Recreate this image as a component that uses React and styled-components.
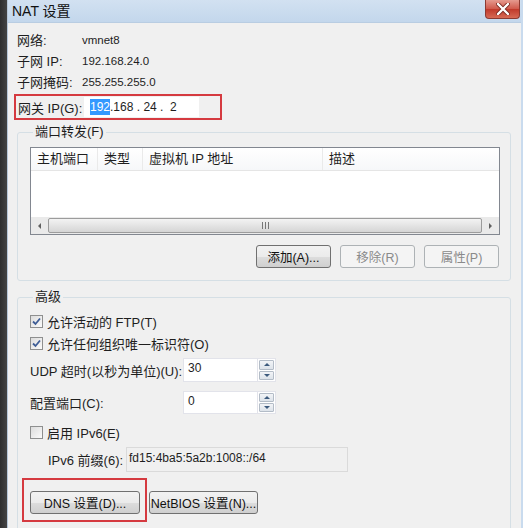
import React from 'react';
import styled, { createGlobalStyle } from 'styled-components';

const Global = createGlobalStyle`
    html, body {
        margin: 0;
        padding: 0;
        background: #383838;
    }
    body {
        font-family: "Liberation Sans", "Noto Sans CJK SC", sans-serif;
        font-size: 13px;
        color: #1e1e1e;
    }
`;

const Screen = styled.div`
    display: flex;
    width: 523px;
    height: 528px;
    overflow: hidden;
`;

const DarkStrip = styled.div`
    width: 7px;
    flex: none;
    background: linear-gradient(to right, #2e2e2e, #444);
`;

const Window = styled.div`
    flex: 1;
    display: flex;
    flex-direction: column;
    border-left: 1px solid #b7c7d8;
    border-right: 2px solid #c9dbee;
    background: #f0f0f0;
`;

const TitleBar = styled.div`
    height: 22px;
    flex: none;
    display: flex;
    align-items: flex-start;
    justify-content: space-between;
    background: linear-gradient(to bottom, #d2e1f1, #c3d7ec);
    border-bottom: 1px solid #b9cde2;
`;

const Title = styled.span`
    font-size: 14px;
    line-height: 22px;
    padding-left: 4px;
    color: #111;
`;

const CloseBtn = styled.div`
    width: 33px;
    height: 18px;
    margin-right: 1px;
    display: flex;
    align-items: center;
    justify-content: center;
    border: 1px solid #8c3a32;
    border-top: none;
    border-radius: 0 0 4px 4px;
    background: linear-gradient(to bottom, #e59a8f, #d0584a 50%, #c0392b 51%, #d66a55);
`;

const Client = styled.div`
    flex: 1;
    padding: 6px 10px 0 9px;
    display: flex;
    flex-direction: column;
`;

const InfoGrid = styled.div`
    display: grid;
    grid-template-columns: 65px 1fr;
    grid-auto-rows: 21px;
    align-items: center;
`;

const Label = styled.span`
    white-space: nowrap;
`;

const Value = styled.span`
    font-size: 11.5px;
`;

const Highlight = styled.div`
    display: flex;
    align-items: center;
    border: 2px solid #d53a40;
    margin-left: ${p => p.$ml || 0}px;
    padding: ${p => p.$pad};
    width: ${p => p.$w ? p.$w + 'px' : 'auto'};
    box-sizing: border-box;
`;

const IpBox = styled.div`
    width: 115px;
    height: 20px;
    box-sizing: border-box;
    background: #fff;
    display: flex;
    align-items: center;
    padding-left: 6px;
    font-size: 12px;
    white-space: pre;
`;

const Selected = styled.span`
    background: #3399ff;
    color: #fff;
    padding: 1px 0;
`;

const Group = styled.fieldset`
    margin: ${p => p.$mt}px 0 0 0;
    padding: ${p => p.$pt}px 10px ${p => p.$pb}px 12px;
    border: 1px solid #d5dfe5;
    border-radius: 3px;
    min-width: 0;
`;

const Legend = styled.legend`
    padding: 0 2px;
    margin-left: 3px;
    line-height: 18px;
`;

const ListView = styled.div`
    height: 88px;
    box-sizing: border-box;
    border: 1px solid #828790;
    background: #fff;
    display: flex;
    flex-direction: column;
`;

const Header = styled.div`
    display: grid;
    grid-template-columns: 67px 45px 180px 1fr;
    height: 22px;
    background: linear-gradient(to bottom, #fff, #f6f7f9);
    border-bottom: 1px solid #e5e5e5;
`;

const HeadCell = styled.div`
    padding-left: 6px;
    line-height: 22px;
    border-right: 1px solid ${p => p.$last ? 'transparent' : '#eaeaea'};
    white-space: nowrap;
`;

const ListBody = styled.div`
    flex: 1;
`;

const HScroll = styled.div`
    height: 17px;
    display: flex;
    align-items: center;
    background: #eaeaea;
`;

const Arrow = styled.div`
    width: 17px;
    height: 17px;
    display: flex;
    align-items: center;
    justify-content: center;
`;

const Thumb = styled.div`
    flex: 1;
    height: 15px;
    border: 1px solid #9c9c9c;
    border-radius: 2px;
    box-sizing: border-box;
    background: linear-gradient(to bottom, #f3f3f3, #e4e4e4 50%, #d5d5d5);
    display: flex;
    align-items: center;
    justify-content: center;
    gap: 2px;
`;

const Grip = styled.i`
    width: 1px;
    height: 7px;
    background: #777;
`;

const ButtonRow = styled.div`
    display: flex;
    justify-content: flex-end;
    gap: 9px;
    margin-top: 10px;
    padding-right: 1px;
`;

const Button = styled.div`
    width: ${p => p.$w || 75}px;
    height: 23px;
    box-sizing: border-box;
    display: flex;
    align-items: center;
    justify-content: center;
    border: 1px solid ${p => p.$disabled ? '#adb2b5' : '#707070'};
    border-radius: 3px;
    background: ${p => p.$disabled
        ? '#f4f4f4'
        : 'linear-gradient(to bottom, #f2f2f2, #ebebeb 50%, #dddddd 51%, #cfcfcf)'};
    color: ${p => p.$disabled ? '#8a8a8a' : '#111'};
    font-size: 12.5px;
    white-space: nowrap;
`;

const CheckRow = styled.div`
    display: flex;
    align-items: center;
    gap: 4px;
    height: 22px;
    margin-top: ${p => p.$mt || 0}px;
`;

const Box = styled.div`
    width: 13px;
    height: 13px;
    box-sizing: border-box;
    border: 1px solid #8e8f8f;
    background: linear-gradient(135deg, #dcdcdc, #fbfbfb);
    display: flex;
    align-items: center;
    justify-content: center;
`;

const FieldRow = styled.div`
    display: flex;
    align-items: center;
    margin-top: ${p => p.$mt}px;
    padding-left: ${p => p.$indent || 0}px;
`;

const FieldLabel = styled.span`
    width: ${p => p.$w}px;
    flex: none;
    white-space: nowrap;
`;

const Spin = styled.div`
    display: flex;
    height: ${p => p.$h}px;
`;

const NumInput = styled.div`
    width: 75px;
    box-sizing: border-box;
    background: #fff;
    border: 1px solid #e2e3ea;
    padding: 2px 4px;
    font-size: 12px;
`;

const SpinBtns = styled.div`
    width: 18px;
    display: flex;
    flex-direction: column;
    gap: 1px;
    background: #fff;
    border: 1px solid #e2e3ea;
    border-left: none;
    padding: 1px;
    box-sizing: border-box;
`;

const SpinBtn = styled.div`
    flex: 1;
    border: 1px solid #b3bcc7;
    border-radius: 1px;
    background: linear-gradient(to bottom, #f2f4f7, #dde3ea);
    display: flex;
    align-items: center;
    justify-content: center;
`;

const ReadOnly = styled.div`
    width: 222px;
    height: 25px;
    box-sizing: border-box;
    border: 1px solid #dadada;
    background: #f0f0f0;
    padding: 3px 2px;
    font-size: 12px;
`;

const BottomRow = styled.div`
    display: flex;
    align-items: flex-end;
    margin-top: 6px;
    margin-left: -8px;
`;

const Tri = ({ dir, color = '#555', size = 4 }) => {
    const pts = {
        left: `${size},0 ${size},${size * 2} 0,${size}`,
        right: `0,0 0,${size * 2} ${size},${size}`,
        up: `0,${size} ${size * 2},${size} ${size},0`,
        down: `0,0 ${size * 2},0 ${size},${size}`,
    }[dir];
    const w = dir === 'left' || dir === 'right' ? size : size * 2;
    const h = dir === 'left' || dir === 'right' ? size * 2 : size;
    return (
        <svg width={w} height={h}>
            <polygon points={pts} fill={color} />
        </svg>
    );
};

const Check = ({ checked }) => (
    <Box>
        {checked && (
            <svg width="9" height="9" viewBox="0 0 9 9">
                <path d="M1 4.5 L3.5 7 L8 1.5" stroke="#3e5d96" strokeWidth="1.8" fill="none" />
            </svg>
        )}
    </Box>
);

const Spinner = ({ value, h }) => (
    <Spin $h={h}>
        <NumInput>{value}</NumInput>
        <SpinBtns>
            <SpinBtn><Tri dir="up" color="#3d5a7d" size={3} /></SpinBtn>
            <SpinBtn><Tri dir="down" color="#3d5a7d" size={3} /></SpinBtn>
        </SpinBtns>
    </Spin>
);

const App = () => {
    return (
        <Screen>
            <Global />
            <DarkStrip />
            <Window>
                <TitleBar>
                    <Title>NAT 设置</Title>
                    <CloseBtn>
                        <svg width="14" height="12" viewBox="0 0 14 12">
                            <path d="M2 1 L12 11 M12 1 L2 11" stroke="#7a2a22" strokeWidth="4" strokeLinecap="round" />
                            <path d="M2 1 L12 11 M12 1 L2 11" stroke="#fff" strokeWidth="2.4" strokeLinecap="round" />
                        </svg>
                    </CloseBtn>
                </TitleBar>

                <Client>
                    <InfoGrid>
                        <Label>网络:</Label>
                        <Value>vmnet8</Value>
                        <Label>子网 IP:</Label>
                        <Value>192.168.24.0</Value>
                        <Label>子网掩码:</Label>
                        <Value>255.255.255.0</Value>
                    </InfoGrid>

                    <Highlight $ml={-3} $pad="1px 0 1px 2px" $w={208} style={{ marginTop: 2 }}>
                        <FieldLabel $w={66}>网关 IP(G):</FieldLabel>
                        <IpBox><Selected>192</Selected>{'.168 . 24 .  2'}</IpBox>
                    </Highlight>

                    <Group $mt={3} $pt={6} $pb={12}>
                        <Legend>端口转发(F)</Legend>
                        <ListView>
                            <Header>
                                <HeadCell>主机端口</HeadCell>
                                <HeadCell>类型</HeadCell>
                                <HeadCell>虚拟机 IP 地址</HeadCell>
                                <HeadCell $last>描述</HeadCell>
                            </Header>
                            <ListBody />
                            <HScroll>
                                <Arrow><Tri dir="left" color="#606060" size={3} /></Arrow>
                                <Thumb><Grip /><Grip /><Grip /></Thumb>
                                <Arrow><Tri dir="right" color="#606060" size={3} /></Arrow>
                            </HScroll>
                        </ListView>
                        <ButtonRow>
                            <Button>添加(A)...</Button>
                            <Button $disabled>移除(R)</Button>
                            <Button $disabled>属性(P)</Button>
                        </ButtonRow>
                    </Group>

                    <Group $mt={7} $pt={4} $pb={20}>
                        <Legend>高级</Legend>
                        <CheckRow>
                            <Check checked />
                            <span>允许活动的 FTP(T)</span>
                        </CheckRow>
                        <CheckRow>
                            <Check checked />
                            <span>允许任何组织唯一标识符(O)</span>
                        </CheckRow>
                        <FieldRow $mt={4}>
                            <FieldLabel $w={153}>UDP 超时(以秒为单位)(U):</FieldLabel>
                            <Spinner value="30" h={24} />
                        </FieldRow>
                        <FieldRow $mt={9}>
                            <FieldLabel $w={153}>配置端口(C):</FieldLabel>
                            <Spinner value="0" h={23} />
                        </FieldRow>
                        <CheckRow $mt={7}>
                            <Check />
                            <span>启用 IPv6(E)</span>
                        </CheckRow>
                        <FieldRow $mt={4} $indent={18}>
                            <FieldLabel $w={78}>IPv6 前缀(6):</FieldLabel>
                            <ReadOnly>fd15:4ba5:5a2b:1008::/64</ReadOnly>
                        </FieldRow>
                        <BottomRow>
                            <Highlight $pad="11px 5px 6px 6px">
                                <Button $w={110}>DNS 设置(D)...</Button>
                            </Highlight>
                            <Button $w={109} style={{ marginLeft: 2, marginBottom: 8 }}>NetBIOS 设置(N)...</Button>
                        </BottomRow>
                    </Group>
                </Client>
            </Window>
        </Screen>
    );
};

export default App;
